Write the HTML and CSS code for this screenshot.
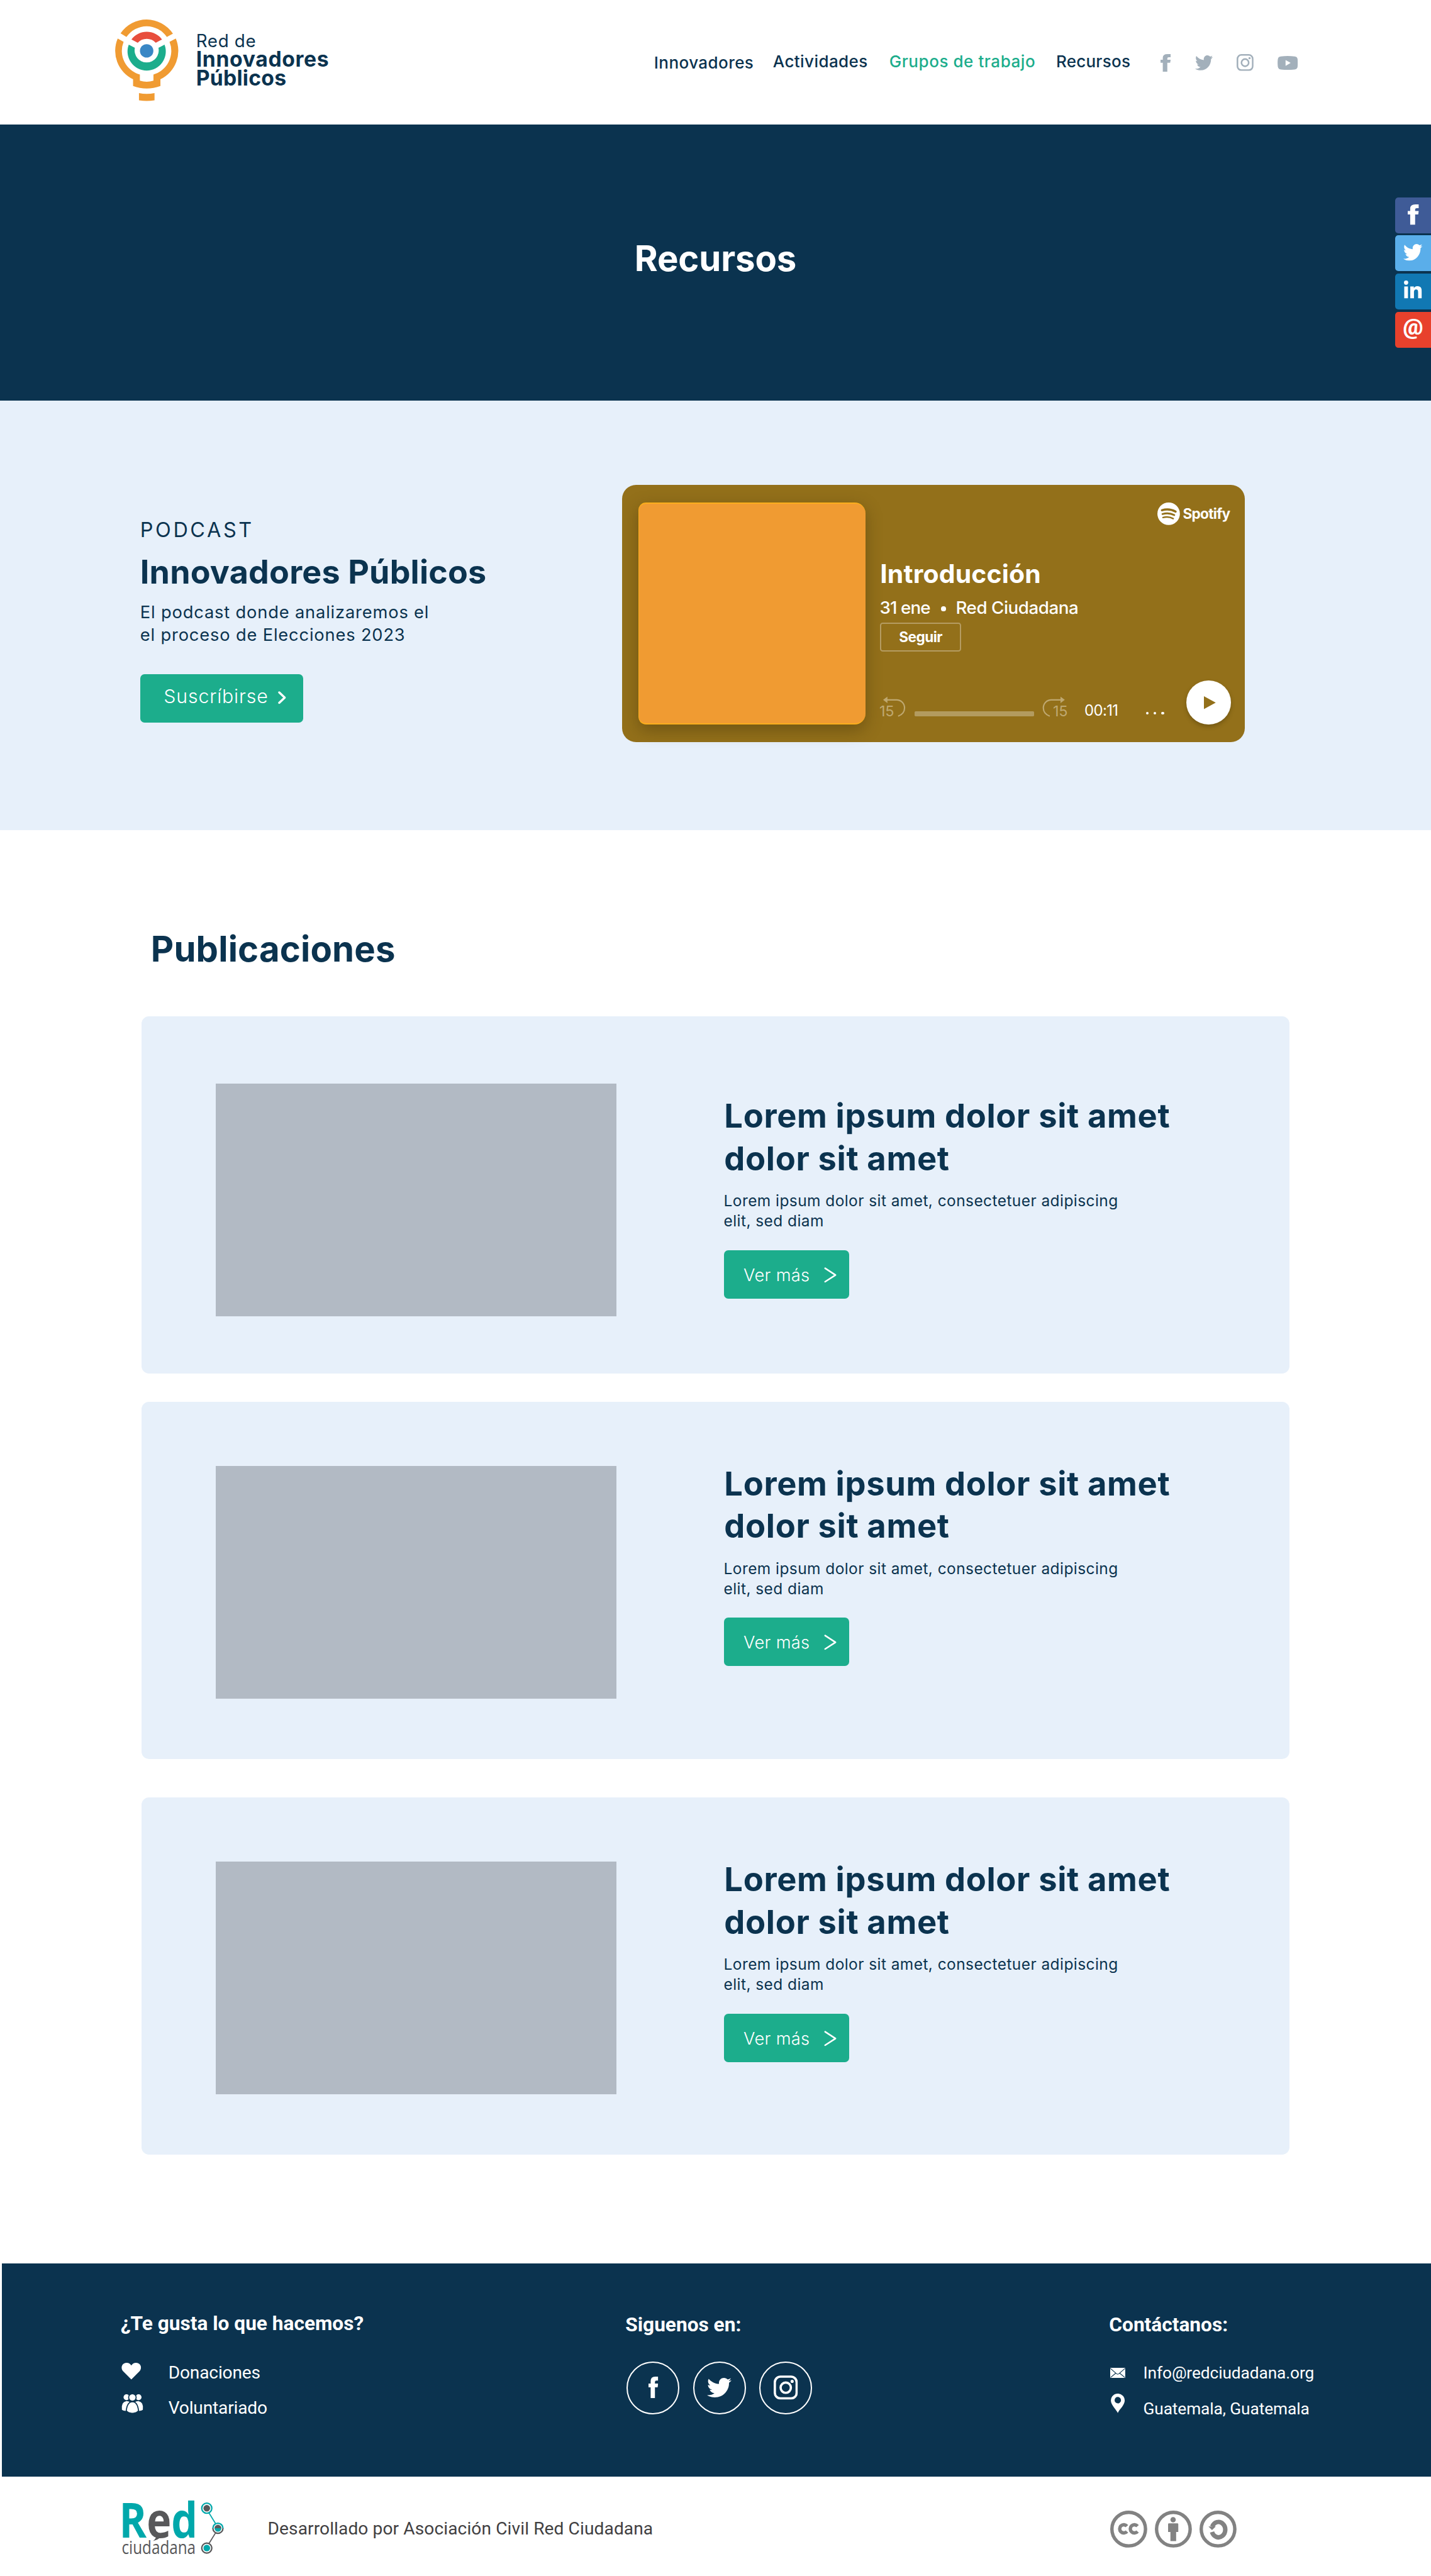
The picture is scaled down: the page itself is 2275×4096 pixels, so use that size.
FILE: index.html
```html
<!DOCTYPE html>
<html lang="es">
<head>
<meta charset="utf-8">
<title>Recursos – Red de Innovadores Públicos</title>
<link rel="stylesheet" href="styles.css">
</head>
<body>
<svg class="sprite" aria-hidden="true">
  <symbol id="i-facebook" viewBox="267 485 54 121" preserveAspectRatio="none"><path d="M279 606V545H267V524H279V510Q279 485 304 485H321V507H311Q303 507 303 515V524H321L318 545H303V606Z"/></symbol>
  <symbol id="i-twitter" viewBox="0 48 512 416" preserveAspectRatio="none"><path d="M459.37 151.716c.325 4.548.325 9.097.325 13.645 0 138.72-105.583 298.558-298.558 298.558-59.452 0-114.68-17.219-161.137-47.106 8.447.974 16.568 1.299 25.34 1.299 49.055 0 94.213-16.568 130.274-44.832-46.132-.975-84.792-31.188-98.112-72.772 6.498.974 12.995 1.624 19.818 1.624 9.421 0 18.843-1.3 27.614-3.573-48.081-9.747-84.143-51.98-84.143-102.985v-1.299c13.969 7.797 30.214 12.67 47.431 13.319-28.264-18.843-46.781-51.005-46.781-87.391 0-19.492 5.197-37.36 14.294-52.954 51.655 63.675 129.3 105.258 216.365 109.807-1.624-7.797-2.599-15.918-2.599-24.04 0-57.828 46.782-104.934 104.934-104.934 30.213 0 57.502 12.67 76.67 33.137 23.715-4.548 46.456-13.32 66.599-25.34-7.798 24.366-24.366 44.833-46.132 57.827 21.117-2.273 41.584-8.122 60.426-16.243-14.292 20.791-32.161 39.308-52.628 54.253z"/></symbol>
  <symbol id="i-instagram" viewBox="0 0 136 136"><rect x="6.5" y="6.5" width="123" height="123" rx="32" fill="none" stroke="currentColor" stroke-width="13"/><circle cx="68" cy="69" r="29" fill="none" stroke="currentColor" stroke-width="13"/><circle cx="104" cy="33" r="9"/></symbol>
  <symbol id="i-youtube" viewBox="0 0 38 26"><path fill-rule="evenodd" d="M6 .8Q19-.8 32 .8Q37 1.300 37.400 6Q38.300 13 37.400 20Q37 24.700 32 25.200Q19 26.800 6 25.200Q1 24.700.600 20Q-.300 13 .600 6Q1 1.300 6 .8ZM15 7.500V18.500L24.500 13Z"/></symbol>
  <symbol id="i-linkedin" viewBox="0 0 448 448"><path d="M100.28 448H7.400V148.900h92.880zM53.790 108.100C24.090 108.100 0 83.500 0 53.800a53.790 53.790 0 0 1 107.580 0c0 29.700-24.100 54.300-53.790 54.300zM447.900 448h-92.680V302.400c0-34.700-.7-79.200-48.290-79.200-48.290 0-55.690 37.700-55.690 76.700V448h-92.780V148.900h89.080v40.800h1.300c12.400-23.500 42.690-48.300 87.880-48.300 94 0 111.280 61.900 111.280 142.300V448z"/></symbol>
  <symbol id="i-chevron" viewBox="0 0 24 30"><path d="M2 2L22 15L2 28" fill="none" stroke="currentColor" stroke-width="3" stroke-linecap="round" stroke-linejoin="round"/></symbol>
  <symbol id="i-chevron-bold" viewBox="0 0 15 24"><path d="M2.300 2.300L12.500 12L2.300 21.700" fill="none" stroke="currentColor" stroke-width="4" stroke-linecap="round" stroke-linejoin="round"/></symbol>
</svg>

<header class="header">
  <a class="brand">
    <svg class="brand__mark" viewBox="100 100 360 470">
      <g fill="#f09b32">
        <path d="M134 188A176.500 176.500 0 0 1 427 190L393 208A137 137 0 0 0 167 208Z"/>
        <path d="M118 217A176.500 176.500 0 0 0 204 445V483Q280 511 357 483V445A176.500 176.500 0 0 0 443 217L408 235A137 137 0 0 1 318 418V453Q280 465 242 453V418A137 137 0 0 1 151 235Z"/>
        <path d="M237 522Q280 532 324 522V563Q280 570 237 563Z"/>
      </g>
      <path fill="#e84e3d" d="M195 222A107 107 0 0 1 366 222L331 241A67.500 67.500 0 0 0 230 241Z"/>
      <path fill="#1cad8c" d="M180 251A107 107 0 1 0 380 251L346 269A67.500 67.500 0 1 1 214 269Z"/>
      <circle cx="280" cy="286" r="37.500" fill="#3987c5"/>
    </svg>
    <span class="brand__text">
      <span class="brand__top">Red de</span>
      <span class="brand__name">Innovadores</span>
      <span class="brand__name brand__name--second">Públicos</span>
    </span>
  </a>
  <nav class="nav">
    <a class="nav__link nav__link--first">Innovadores</a>
    <a class="nav__link">Actividades</a>
    <a class="nav__link nav__link--active">Grupos de trabajo</a>
    <a class="nav__link nav__link--last">Recursos</a>
    <svg class="nav__icon nav__icon--fb"><use href="#i-facebook"/></svg>
    <svg class="nav__icon nav__icon--tw"><use href="#i-twitter"/></svg>
    <svg class="nav__icon nav__icon--ig"><use href="#i-instagram"/></svg>
    <svg class="nav__icon nav__icon--yt"><use href="#i-youtube"/></svg>
  </nav>
</header>

<aside class="share">
  <a class="share__item share__item--fb"><svg><use href="#i-facebook"/></svg></a>
  <a class="share__item share__item--tw"><svg><use href="#i-twitter"/></svg></a>
  <a class="share__item share__item--in"><svg><use href="#i-linkedin"/></svg></a>
  <a class="share__item share__item--at">@</a>
</aside>

<main>
  <section class="hero"><h1 class="hero__title">Recursos</h1></section>

  <section class="podcast">
    <div class="podcast__info">
      <p class="podcast__label">PODCAST</p>
      <h2 class="podcast__title">Innovadores Públicos</h2>
      <p class="podcast__text">El podcast donde analizaremos el<br>el proceso de Elecciones 2023</p>
      <a class="button button--subscribe">Suscríbirse<svg class="button__chevron"><use href="#i-chevron-bold"/></svg></a>
    </div>
    <div class="player">
      <div class="player__art"></div>
      <div class="player__body">
        <div class="spotify">
          <svg class="spotify__mark" viewBox="0 0 42 42"><circle cx="21" cy="21" r="21" fill="#fff"/><g fill="none" stroke="#93701a" stroke-linecap="round"><path d="M8.500 14.500Q22 10.500 34 17" stroke-width="4"/><path d="M9.500 21.500Q21.500 18 31.500 23.500" stroke-width="3.400"/><path d="M10.500 28Q20.500 25.200 29.500 30" stroke-width="2.800"/></g></svg>
          <span class="spotify__name">Spotify</span>
        </div>
        <h3 class="player__title">Introducción</h3>
        <p class="player__meta"><span>31 ene</span><i class="player__dot"></i><span>Red Ciudadana</span></p>
        <a class="player__follow">Seguir</a>
        <div class="controls">
          <svg class="controls__skip" viewBox="0 0 48 42"><path d="M10 8H32C41 8 47 15 47 23C47 31 42 36 35 38.500" fill="none" stroke="#bfa870" stroke-width="2.500"/><path d="M7 8L15 2V14Z" fill="#bfa870"/><text x="0" y="38.700">15</text></svg>
          <div class="controls__bar"></div>
          <svg class="controls__skip" viewBox="0 0 48 42"><path d="M38 8H17C8 8 2 15 2 23C2 31 7 36 14 38.500" fill="none" stroke="#bfa870" stroke-width="2.500"/><path d="M42 8L34 2V14Z" fill="#bfa870"/><text x="20" y="38.700">15</text></svg>
          <span class="controls__time">00:11</span>
          <span class="controls__more"><i></i><i></i><i></i></span>
          <a class="controls__play"><svg viewBox="0 0 22 24"><path d="M0 0L22 12L0 24Z" fill="#93701a"/></svg></a>
        </div>
      </div>
    </div>
  </section>

  <section class="publications">
    <h2 class="publications__title">Publicaciones</h2>
    <article class="card card--first">
      <div class="card__image"></div>
      <div class="card__body">
        <h3 class="card__title">Lorem ipsum dolor sit amet<br>dolor sit amet</h3>
        <p class="card__text">Lorem ipsum dolor sit amet, consectetuer adipiscing<br>elit, sed diam</p>
        <a class="button button--more">Ver más<svg class="button__chevron"><use href="#i-chevron"/></svg></a>
      </div>
    </article>
    <article class="card">
      <div class="card__image"></div>
      <div class="card__body">
        <h3 class="card__title">Lorem ipsum dolor sit amet<br>dolor sit amet</h3>
        <p class="card__text">Lorem ipsum dolor sit amet, consectetuer adipiscing<br>elit, sed diam</p>
        <a class="button button--more">Ver más<svg class="button__chevron"><use href="#i-chevron"/></svg></a>
      </div>
    </article>
    <article class="card card--last">
      <div class="card__image"></div>
      <div class="card__body">
        <h3 class="card__title">Lorem ipsum dolor sit amet<br>dolor sit amet</h3>
        <p class="card__text">Lorem ipsum dolor sit amet, consectetuer adipiscing<br>elit, sed diam</p>
        <a class="button button--more">Ver más<svg class="button__chevron"><use href="#i-chevron"/></svg></a>
      </div>
    </article>
  </section>
</main>

<footer>
  <div class="footer">
    <section class="footer__help">
      <h4 class="footer__title">¿Te gusta lo que hacemos?</h4>
      <ul class="links links--help">
        <li><svg class="links__heart" viewBox="0 0 37 31"><path d="M18.500 31L3 15.500C-1 11 0 4 4.500 1.500C9.500-1.300 15.500 0 18.500 5C21.500 0 27.500-1.300 32.500 1.500C37 4 38 11 34 15.500Z" fill="#fff"/></svg><a>Donaciones</a></li>
        <li><svg class="links__people" viewBox="0 0 82 70"><g fill="#fff"><circle cx="19" cy="11" r="11"/><circle cx="64" cy="11" r="11"/><path d="M18 26Q28 25 32 31Q20 42 20 62Q8 63 2 58Q-2 30 18 26Z"/><path d="M64 26Q54 25 50 31Q62 42 62 62Q74 63 80 58Q84 30 64 26Z"/></g><g fill="#fff" stroke="#0b334f" stroke-width="4"><circle cx="41" cy="12" r="14"/><path d="M41 28Q60 28 64 62Q55 72 41 71Q27 72 18 62Q22 28 41 28Z"/></g></svg><a>Voluntariado</a></li>
      </ul>
    </section>
    <section class="footer__follow">
      <h4 class="footer__title">Siguenos en:</h4>
      <div class="social">
        <a class="social__item social__item--fb"><svg><use href="#i-facebook"/></svg></a>
        <a class="social__item social__item--tw"><svg><use href="#i-twitter"/></svg></a>
        <a class="social__item social__item--ig"><svg><use href="#i-instagram"/></svg></a>
      </div>
    </section>
    <section class="footer__contact">
      <h4 class="footer__title">Contáctanos:</h4>
      <ul class="links links--contact">
        <li><svg class="links__mail" viewBox="0 0 84 56"><rect width="84" height="56" rx="2" fill="#fff"/><path d="M1 3L35 33Q42 38 49 33L83 3M2 54L31 30M82 54L53 30" fill="none" stroke="#0b334f" stroke-width="4"/></svg><a>Info@redciudadana.org</a></li>
        <li><svg class="links__pin" viewBox="0 0 78 110"><path fill="#fff" fill-rule="evenodd" d="M39 110C34 92 0 66 0 38A39 38 0 0 1 78 38C78 66 44 92 39 110ZM39 19A18 18 0 1 0 39 55A18 18 0 1 0 39 19Z"/></svg><a>Guatemala, Guatemala</a></li>
      </ul>
    </section>
  </div>
  <div class="credits">
    <svg class="credits__logo" viewBox="226 4660 200 115">
      <text class="logo-red" x="222" y="4731.400" textLength="146" lengthAdjust="spacingAndGlyphs"><tspan>R</tspan><tspan fill="#58585a">e</tspan><tspan>d</tspan></text>
      <path d="M291 4729L302 4729Q294 4736 285 4738Q290 4734 291 4729Z" fill="#58585a"/>
      <text class="logo-city" x="226.500" y="4762" textLength="138" lengthAdjust="spacingAndGlyphs">ciudadana</text>
      <path d="M389 4685L402 4706" stroke="#00a8ab" stroke-width="2"/>
      <path d="M389 4743L402 4722" stroke="#58585a" stroke-width="2"/>
      <g fill="#fff" stroke-width="2.600"><circle cx="385.200" cy="4676.700" r="9.400" stroke="#00a8ab"/><path d="M396.600 4714A9.400 9.400 0 0 1 415.400 4714" stroke="#00a8ab"/><path d="M396.600 4714A9.400 9.400 0 0 0 415.400 4714" stroke="#58585a"/><circle cx="385.200" cy="4751" r="9.400" stroke="#58585a"/></g>
      <circle cx="385.200" cy="4676.700" r="6.200" fill="#58585a"/><path d="M399.600 4714A6.400 6.400 0 0 1 412.400 4714Z" fill="#58585a"/><path d="M399.600 4714A6.400 6.400 0 0 0 412.400 4714Z" fill="#00a8ab"/><circle cx="385.200" cy="4751" r="6.200" fill="#00a8ab"/>
    </svg>
    <p class="credits__text">Desarrollado por Asociación Civil Red Ciudadana</p>
    <div class="license">
      <svg viewBox="0 0 207 207"><circle cx="103.500" cy="103.500" r="94"/><path d="M93.600 87.200A23 23 0 1 0 93.600 116.800M153 87.200A23 23 0 1 0 153 116.800"/></svg>
      <svg viewBox="0 0 207 207"><circle cx="103.500" cy="103.500" r="94"/><circle class="license__fill" cx="102" cy="51" r="15"/><path class="license__fill" d="M74 76Q74 71 79 71H126Q131 71 131 76V120H119V171H87V120H74Z"/></svg>
      <svg viewBox="0 0 207 207"><circle cx="103.500" cy="103.500" r="94"/><path class="license__loop" d="M71 90A38 43 0 1 1 70 120"/><path class="license__fill" d="M50 89H91L70 109Z"/></svg>
    </div>
  </div>
</footer>
</body>
</html>
```
FILE: styles.css
```css
/* 1rem is 100 design pixels on a 2668px wide canvas */
html { font-size: calc(100vw / 26.68); }
* { box-sizing: border-box; }
body { margin: 0; position: relative; background: #fff; color: #0b334f; font-family: Inter, "Liberation Sans", sans-serif; font-size: .3rem; overflow-x: hidden; }
h1, h2, h3, h4, p, ul { margin: 0; padding: 0; font-weight: inherit; }
ul { list-style: none; }
svg { display: block; fill: currentColor; flex: none; overflow: visible; }
.sprite { position: absolute; width: 0; height: 0; }

/* Header */
.header { display: flex; height: 2.317rem; padding-left: 2.133rem; }
.brand { display: flex; width: 10.062rem; }
.brand__mark { width: 1.2rem; height: 1.567rem; margin-top: .333rem; }
.brand__text { display: flex; flex-direction: column; padding: .625rem 0 0 .323rem; }
.brand__top { font-size: .325rem; line-height: .3rem; letter-spacing: .008rem; }
.brand__name { font-size: .395rem; line-height: .355rem; font-weight: 700; letter-spacing: .0075rem; }
.brand__name--second { letter-spacing: .003rem; }
.nav { display: grid; grid-template-columns: 2.215rem 2.17rem 3.11rem 1.953rem .637rem .78rem .763rem .4rem; align-items: start; padding-top: .953rem; }
.nav__link { font-size: .305rem; font-weight: 450; line-height: .4rem; letter-spacing: .005rem; white-space: nowrap; }
.nav__link--first { margin-top: .02rem; }
.nav__link--active { color: #1cad8c; letter-spacing: .0065rem; }
.nav__link--last { letter-spacing: .003rem; }
.nav__icon { color: #a3b0bb; }
.nav__icon--fb { width: .19rem; height: .327rem; margin-top: .052rem; }
.nav__icon--tw { width: .33rem; height: .28rem; margin-top: .08rem; }
.nav__icon--ig { width: .315rem; height: .315rem; margin-top: .06rem; }
.nav__icon--yt { width: .38rem; height: .26rem; margin-top: .09rem; }

/* Share buttons floating over the right edge */
.share { position: absolute; top: 3.68rem; right: 0; display: flex; flex-direction: column; gap: .044rem; color: #fff; }
.share__item { display: flex; align-items: center; justify-content: center; width: .67rem; height: .667rem; border-radius: .06rem 0 0 .06rem; }
.share__item--fb { background: #3f5b97; }
.share__item--fb svg { width: .207rem; height: .38rem; margin-bottom: .03rem; }
.share__item--tw { background: #5aaeea; }
.share__item--tw svg { width: .357rem; height: .31rem; margin-bottom: .04rem; }
.share__item--in { background: #1178b3; }
.share__item--in svg { width: .333rem; height: .333rem; margin-bottom: .08rem; }
.share__item--at { background: #e8412c; font: 900 .42rem/.5rem Roboto, sans-serif; padding-bottom: .08rem; }

/* Hero */
.hero { height: 5.15rem; padding-top: 2.1rem; background: #0b334f; color: #fff; text-align: center; }
.hero__title { font-size: .66rem; line-height: .8rem; font-weight: 700; letter-spacing: -.0016rem; }

/* Buttons */
.button { display: flex; align-items: center; border-radius: .08rem; background: #1cad8c; color: #fff; font-weight: 300; white-space: nowrap; }
.button--subscribe { width: 3.035rem; height: .903rem; margin-top: .511rem; padding: 0 0 .08rem .44rem; font-size: .355rem; letter-spacing: .0098rem; }
.button--subscribe .button__chevron { width: .15rem; height: .24rem; margin: .05rem 0 0 .18rem; }
.button--more { width: 2.343rem; height: .904rem; margin-top: .353rem; padding: .02rem 0 0 .37rem; font-size: .32rem; letter-spacing: .004rem; }
.button--more .button__chevron { width: .235rem; height: .29rem; margin-left: .26rem; }

/* Podcast */
.podcast { display: flex; align-items: flex-start; height: 8.01rem; padding-left: 2.613rem; background: #e7f0fa; }
.podcast__info { width: 8.983rem; padding-top: 2.18rem; }
.podcast__label { font-size: .38rem; line-height: .46rem; letter-spacing: .042rem; }
.podcast__title { margin-top: .206rem; font-size: .61rem; line-height: .72rem; font-weight: 700; letter-spacing: .0022rem; }
.podcast__text { margin-top: .18rem; font-size: .32rem; line-height: .423rem; letter-spacing: .0098rem; }

.player { display: flex; gap: .26rem; width: 11.617rem; height: 4.797rem; margin-top: 1.577rem; padding: .331rem .265rem 0 .304rem; border-radius: .26rem; background: #93701a; color: #fff; }
.player__art { width: 4.24rem; height: 4.138rem; flex: none; border: solid #fbae1c; border-width: 2px 0 2px 1px; border-radius: .14rem .2rem .2rem .14rem; background: #f09b32; box-shadow: 0 .1rem .3rem rgba(60, 45, 10, .4); }
.player__body { flex: 1; }
.spotify { display: flex; justify-content: flex-end; align-items: center; gap: .06rem; height: .42rem; }
.spotify__mark { width: .42rem; height: .42rem; }
.spotify__name { width: .895rem; font-size: .265rem; line-height: .42rem; font-weight: 700; letter-spacing: -.008rem; white-space: nowrap; }
.player__title { margin-top: .623rem; padding-left: .01rem; font-size: .48rem; line-height: .58rem; font-weight: 700; letter-spacing: .002rem; }
.player__meta { display: flex; align-items: center; margin-top: .131rem; font-size: .325rem; line-height: .4rem; font-weight: 450; letter-spacing: -.005rem; }
.player__meta span:first-child { width: 1.148rem; letter-spacing: -.01rem; }
.player__dot { width: .09rem; height: .09rem; margin: .05rem .182rem 0 0; border-radius: 50%; background: #fff; }
.player__follow { display: flex; align-items: center; justify-content: center; width: 1.51rem; height: .54rem; margin: .078rem 0 0 .01rem; border: 2px solid #b59c62; border-radius: .05rem; font-size: .265rem; font-weight: 700; letter-spacing: -.006rem; }
.controls { display: grid; grid-template-columns: .65rem 2.385rem .785rem 1.148rem .755rem .825rem; align-items: start; margin-top: .54rem; }
.controls__skip { width: .48rem; height: .42rem; margin-top: .28rem; color: #bfa870; font-size: 27.5px; letter-spacing: -.4px; }
.controls__bar { width: 2.225rem; height: .094rem; margin-top: .576rem; border-radius: .02rem; background: #b39b5f; }
.controls__time { margin-top: .415rem; font-size: .28rem; line-height: .3rem; letter-spacing: -.007rem; }
.controls__more { display: flex; justify-content: space-between; width: .335rem; margin-top: .585rem; }
.controls__more i { width: .05rem; height: .05rem; border-radius: 50%; background: #fff; }
.controls__play { display: flex; align-items: center; justify-content: center; width: .825rem; height: .825rem; padding-left: .05rem; border-radius: 50%; background: #fff; box-shadow: 0 .04rem .08rem rgba(60, 45, 10, .35); }
.controls__play svg { width: .22rem; height: .24rem; }

/* Publications */
.publications { height: 26.73rem; padding: 1.817rem 0 0 2.637rem; }
.publications__title { padding-left: .175rem; font-size: .66rem; line-height: .8rem; font-weight: 700; letter-spacing: .002rem; }
.card { display: flex; align-items: flex-start; width: 21.41rem; height: 6.663rem; margin-top: .523rem; padding-left: 1.388rem; border-radius: .14rem; background: #e7f0fa; }
.card__image { width: 7.467rem; height: 4.34rem; margin-top: 1.197rem; background: #b2bac4; }
.card__body { margin-left: 2.001rem; padding-top: 1.137rem; }
.card--first { margin-top: .86rem; }
.card--first .card__image { margin-top: 1.256rem; }
.card--first .card__body { padding-top: 1.466rem; }
.card--last { margin-top: .719rem; }
.card__title { padding-left: .01rem; font-size: .615rem; line-height: .79rem; font-weight: 700; letter-spacing: .0075rem; }
.card__text { margin-top: .199rem; font-size: .287rem; line-height: .38rem; letter-spacing: .0051rem; }

/* Footer */
.footer { display: grid; grid-template-columns: 9.41rem 9.02rem auto; height: 3.973rem; margin-left: .04rem; padding: .903rem 0 0 2.21rem; background: #0b334f; color: #fff; font-family: Roboto, sans-serif; }
.footer__follow, .footer__contact { padding-top: .026rem; }
.footer__title { font-size: .371rem; line-height: .44rem; font-weight: 700; }
.links li { display: flex; align-items: flex-start; line-height: .4rem; }
.links--help { margin-top: .501rem; font-size: .33rem; letter-spacing: -.002rem; }
.links--help li { height: .65rem; }
.links__heart { width: .37rem; height: .31rem; margin: .01rem .51rem 0 .01rem; }
.links__people { width: .41rem; height: .35rem; margin: -.049rem .47rem 0 .01rem; }
.links--contact { margin-top: .478rem; font-size: .308rem; letter-spacing: -.001rem; }
.links--contact li { height: .66rem; }
.links__mail { width: .28rem; height: .187rem; margin: .1rem .335rem 0 .02rem; }
.links__pin { width: .26rem; height: .365rem; margin: -.08rem .345rem 0 .03rem; }
.social { display: flex; gap: .25rem; margin: .456rem 0 0 .023rem; }
.social__item { display: flex; align-items: center; justify-content: center; width: .987rem; height: .987rem; border: 2px solid #fff; border-radius: 50%; }
.social__item--fb svg { width: .18rem; height: .403rem; }
.social__item--tw svg { width: .457rem; height: .363rem; }
.social__item--ig svg { width: .45rem; height: .453rem; }

.credits { display: flex; align-items: flex-start; height: 1.85rem; padding-left: 2.26rem; font-family: Roboto, sans-serif; }
.credits__logo { width: 2rem; height: 1.15rem; margin-top: .427rem; }
.logo-red { font: 700 90px "Open Sans", sans-serif; fill: #00a8ab; }
.logo-city { font: 400 35px "Open Sans", sans-serif; fill: #58585a; }
.credits__text { width: 15.71rem; margin: .777rem 0 0 .73rem; font-size: .33rem; line-height: .4rem; letter-spacing: .0011rem; color: #414042; }
.license { display: flex; gap: .142rem; margin-top: .637rem; }
.license svg { width: .69rem; height: .69rem; fill: none; stroke: #828282; stroke-width: 19; }
.license .license__fill { fill: #828282; stroke: none; }
.license__loop { stroke-width: 25; }
```
